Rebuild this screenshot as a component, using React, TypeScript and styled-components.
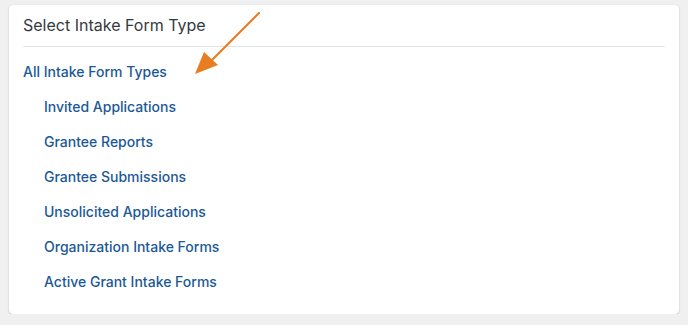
import styled, { createGlobalStyle } from "styled-components";

const GlobalStyle = createGlobalStyle`
  html, body {
    margin: 0;
    padding: 0;
    background: #f0f0f0;
    font-family: Inter, "Noto Sans", sans-serif;
  }
`;

const Page = styled.div`
  padding: 5px 9px 0 9px;
  width: 670px;
`;

const Card = styled.div`
  position: relative;
  background: #ffffff;
  border-radius: 4px;
  box-shadow: 0 1px 2px rgba(0, 0, 0, 0.18), 0 0 1px rgba(0, 0, 0, 0.12);
  padding: 10px 14px 18px 14px;
  height: 309px;
  box-sizing: border-box;
`;

const Title = styled.h2`
  margin: 0;
  font-size: 16px;
  font-weight: 400;
  color: #353a40;
  line-height: 20px;
  padding-bottom: 11px;
  border-bottom: 1px solid #e4e4e4;
`;

const List = styled.ul`
  list-style: none;
  margin: 0;
  padding: 15px 0 0 0;
  display: flex;
  flex-direction: column;
  gap: 15px;
`;

const Item = styled.li<{ $nested?: boolean }>`
  padding-left: ${(p) => (p.$nested ? "21px" : "0")};
  height: 20px;
  font-size: 14px;
  line-height: 20px;
`;

const LinkText = styled.a`
  display: inline-block;
  font-size: 14px;
  line-height: 20px;
  font-weight: 500;
  color: #1b5996;
  text-decoration: none;
`;

const Arrow = styled.svg`
  position: absolute;
  left: 183px;
  top: 5px;
  pointer-events: none;
`;

const types = [
  "Invited Applications",
  "Grantee Reports",
  "Grantee Submissions",
  "Unsolicited Applications",
  "Organization Intake Forms",
  "Active Grant Intake Forms",
];

export default function App() {
  return (
    <>
      <GlobalStyle />
      <Page>
        <Card>
          <Title>Select Intake Form Type</Title>
          <List>
            <Item>
              <LinkText href="#">All Intake Form Types</LinkText>
            </Item>
            {types.map((t) => (
              <Item key={t} $nested>
                <LinkText href="#">{t}</LinkText>
              </Item>
            ))}
          </List>
          {/* pointer arrow from the screenshot annotation */}
          <Arrow width="80" height="75" viewBox="0 0 80 75">
            <line x1="67" y1="3" x2="20" y2="50" stroke="#e97d22" strokeWidth="2.2" strokeLinecap="round" />
            <polygon points="3,64 12,42 26,55" fill="#e97d22" />
          </Arrow>
        </Card>
      </Page>
    </>
  );
}
